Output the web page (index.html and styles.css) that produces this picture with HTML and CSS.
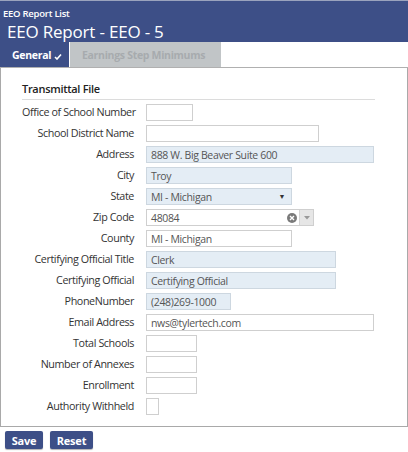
FILE: index.html
```html
<!DOCTYPE html>
<html>
<head>
<meta charset="utf-8">
<link rel="stylesheet" href="styles.css">
</head>
<body>
<div class="header">
  <div class="crumb">EEO Report List</div>
  <div class="title">EEO Report - EEO - 5</div>
</div>
<div class="tabs">
  <div class="tab active">General<svg class="check" width="8" height="7" viewBox="0 0 8 7"><path d="M1 4 L3 6 L7 1.5" fill="none" stroke="#fff" stroke-width="1.6"/></svg></div>
  <div class="tab inactive">Earnings Step Minimums</div>
</div>
<div class="panel">
  <div class="section-title">Transmittal File</div>
  <div class="form">
    <label>Office of School Number</label><div class="field"><span class="box w47"></span></div>
    <label>School District Name</label><div class="field"><span class="box w173"></span></div>
    <label>Address</label><div class="field"><span class="box ro w228">888 W. Big Beaver Suite 600</span></div>
    <label>City</label><div class="field"><span class="box ro w146">Troy</span></div>
    <label>State</label><div class="field"><span class="box ro w146 select">MI - Michigan<span class="arrow">▼</span></span></div>
    <label>Zip Code</label><div class="field"><span class="box w168 combo"><span class="ctext">48084</span><span class="clear"><svg width="10" height="10" viewBox="0 0 10 10"><circle cx="5" cy="5" r="5" fill="#7a7a7a"/><path d="M3 3 L7 7 M7 3 L3 7" stroke="#fff" stroke-width="1.4"/></svg></span><span class="dd"><svg width="6" height="4" viewBox="0 0 6 4"><path d="M0 0 H6 L3 3.5 Z" fill="#999"/></svg></span></span></div>
    <label>County</label><div class="field"><span class="box w146">MI - Michigan</span></div>
    <label>Certifying Official Title</label><div class="field"><span class="box ro w190">Clerk</span></div>
    <label>Certifying Official</label><div class="field"><span class="box ro w190">Certifying Official</span></div>
    <label>PhoneNumber</label><div class="field"><span class="box ro w85">(248)269-1000</span></div>
    <label>Email Address</label><div class="field"><span class="box w228">nws@tylertech.com</span></div>
    <label>Total Schools</label><div class="field"><span class="box w51"></span></div>
    <label>Number of Annexes</label><div class="field"><span class="box w51"></span></div>
    <label>Enrollment</label><div class="field"><span class="box w51"></span></div>
    <label>Authority Withheld</label><div class="field"><span class="box chk"></span></div>
  </div>
</div>
<div class="actions">
  <button class="btn">Save</button>
  <button class="btn">Reset</button>
</div>
</body>
</html>
```
FILE: styles.css
```css
* { box-sizing: border-box; }
html, body { margin: 0; padding: 0; background: #fff; }
body {
  width: 408px;
  height: 452px;
  font-family: "Open Sans", "Noto Sans", sans-serif;
  color: #333;
  overflow: hidden;
}
.header {
  background: #3d4f87;
  height: 42px;
  color: #fff;
  border-top: 1px solid #9aa3bd;
  padding: 6px 0 0 3px;
  display: flex;
  flex-direction: column;
}
.crumb {
  font-size: 9.5px;
  font-weight: 600;
  line-height: 13px;
  height: 13px;
  letter-spacing: -0.25px;
}
.title {
  font-size: 17px;
  line-height: 20px;
  margin-top: 2px;
  padding-left: 4px;
  letter-spacing: -0.2px;
}
.tabs {
  display: flex;
  height: 26px;
  border-bottom: 1px solid #b0b0b0;
}
.tab {
  height: 25px;
  display: flex;
  align-items: center;
  font-size: 10.5px;
  font-weight: 700;
  letter-spacing: -0.3px;
}
.tab.active {
  width: 69px;
  background: #3d4f87;
  color: #fff;
  padding-left: 12px;
}
.check { margin-left: 3px; margin-top: 3px; }
.tab.inactive {
  width: 151px;
  margin-left: 1px;
  background: #c1c5c7;
  color: #a7abae;
  padding-left: 12px;
}
.panel {
  border-left: 1px solid #a9a9a9;
  border-right: 1px solid #a9a9a9;
  border-bottom: 1px solid #a9a9a9;
  height: 359px;
  padding: 12px 0 0 21px;
}
.section-title {
  width: 353px;
  font-size: 11px;
  font-weight: 600;
  color: #222;
  line-height: 17px;
  padding-bottom: 2px;
  border-bottom: 1px solid #dcdcdc;
  letter-spacing: -0.3px;
}
.form {
  display: grid;
  grid-template-columns: 112px auto;
  column-gap: 12px;
  grid-auto-rows: 21px;
  margin-top: 2px;
}
.form label {
  text-align: right;
  font-size: 10.75px;
  line-height: 21px;
  color: #333;
  white-space: nowrap;
  letter-spacing: -0.4px;
}
.field { display: flex; align-items: center; }
.box {
  display: flex;
  align-items: center;
  height: 17px;
  border: 1px solid #cfcfcf;
  background: #fff;
  font-size: 10.5px;
  color: #555;
  padding-left: 4px;
  letter-spacing: -0.35px;
  white-space: nowrap;
}
.box.ro { background: #e4edf5; border-color: #cdd7e0; }
.w47 { width: 47px; }
.w51 { width: 51px; }
.w85 { width: 85px; }
.w146 { width: 146px; }
.w168 { width: 168px; }
.w173 { width: 173px; }
.w190 { width: 190px; }
.w228 { width: 228px; }
.select { position: relative; }
.arrow {
  position: absolute;
  right: 6px;
  top: 3px;
  font-size: 7px;
  color: #333;
}
.combo { padding-right: 0; }
.ctext { flex: 1; }
.clear { display: flex; margin-right: 2px; }
.dd {
  width: 14px;
  height: 15px;
  background: #e6e6e6;
  border-left: 1px solid #d4d4d4;
  display: flex;
  align-items: center;
  justify-content: center;
}
.chk { width: 13px; padding: 0; }
.actions {
  display: flex;
  gap: 7px;
  padding: 4px 0 0 5px;
}
.btn {
  height: 18px;
  border: none;
  border-radius: 2px;
  background: #3d4f87;
  color: #fff;
  font-family: "Open Sans", "Noto Sans", sans-serif;
  font-size: 11px;
  font-weight: 700;
  padding: 0;
  letter-spacing: -0.2px;
  box-shadow: 0 1px 1px rgba(0,0,0,0.3);
}
.btn:first-child { width: 38px; }
.btn:last-child { width: 43px; }
```
